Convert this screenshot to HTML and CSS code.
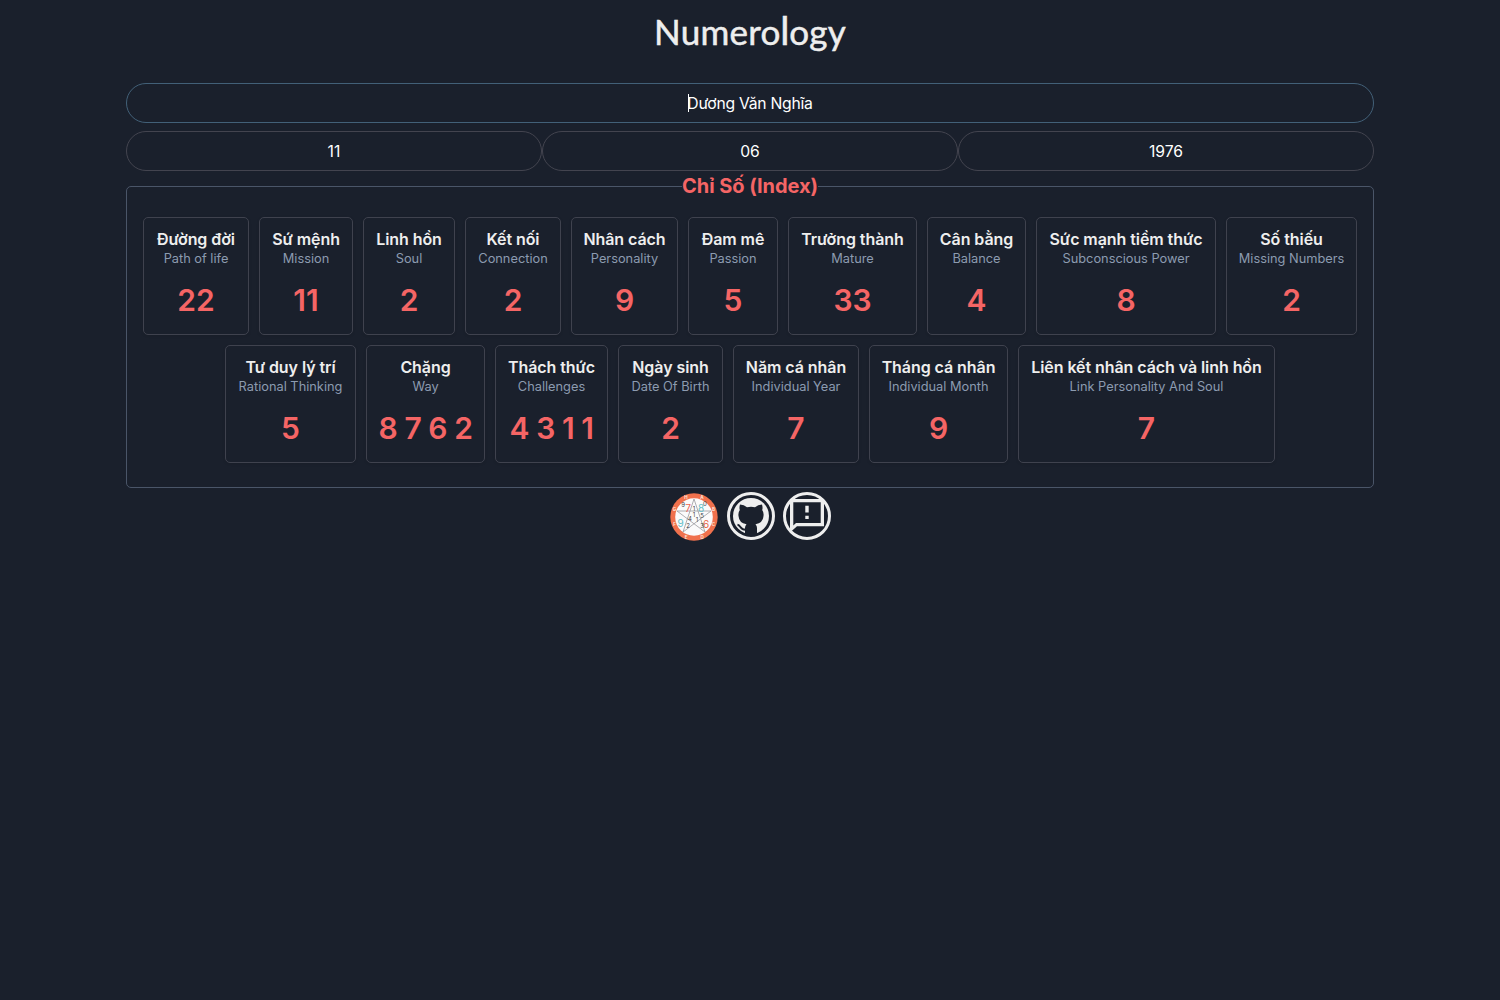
FILE: index.html
```html
<!DOCTYPE html>
<html lang="vi">
<head>
<meta charset="utf-8">
<title>Numerology</title>
<link rel="stylesheet" href="styles.css">
</head>
<body>
<main class="page">
  <h1 class="brand">Numero<span class="tall">l</span>ogy</h1>
  <div class="field field-name"><span class="value"><i class="caret"></i>Dương Văn Nghĩa</span></div>
  <div class="date">
    <div class="field">11</div>
    <div class="field">06</div>
    <div class="field">1976</div>
  </div>
  <section class="index">
    <h2 class="legend"><span>Chỉ Số (Index)</span></h2>
    <div class="cards">
      <article class="card" style="width:106px"><h3>Đường đời</h3><p>Path of life</p><strong>22</strong></article>
      <article class="card" style="width:94px"><h3>Sứ mệnh</h3><p>Mission</p><strong>11</strong></article>
      <article class="card" style="width:92px"><h3>Linh hồn</h3><p>Soul</p><strong>2</strong></article>
      <article class="card" style="width:96px"><h3>Kết nối</h3><p>Connection</p><strong>2</strong></article>
      <article class="card" style="width:107px"><h3>Nhân cách</h3><p>Personality</p><strong>9</strong></article>
      <article class="card" style="width:90px"><h3>Đam mê</h3><p>Passion</p><strong>5</strong></article>
      <article class="card" style="width:129px"><h3>Trưởng thành</h3><p>Mature</p><strong>33</strong></article>
      <article class="card" style="width:99px"><h3>Cân bằng</h3><p>Balance</p><strong>4</strong></article>
      <article class="card" style="width:180px"><h3>Sức mạnh tiềm thức</h3><p>Subconscious Power</p><strong>8</strong></article>
      <article class="card" style="width:131px"><h3>Số thiếu</h3><p>Missing Numbers</p><strong>2</strong></article>
      <article class="card" style="width:131px"><h3>Tư duy lý trí</h3><p>Rational Thinking</p><strong>5</strong></article>
      <article class="card" style="width:119px"><h3>Chặng</h3><p>Way</p><strong class="series">8 7 6 2</strong></article>
      <article class="card" style="width:113px"><h3>Thách thức</h3><p>Challenges</p><strong class="series">4 3 1 1</strong></article>
      <article class="card" style="width:105px"><h3>Ngày sinh</h3><p>Date Of Birth</p><strong>2</strong></article>
      <article class="card" style="width:126px"><h3>Năm cá nhân</h3><p>Individual Year</p><strong>7</strong></article>
      <article class="card" style="width:139px"><h3>Tháng cá nhân</h3><p>Individual Month</p><strong>9</strong></article>
      <article class="card" style="width:257px"><h3>Liên kết nhân cách và linh hồn</h3><p>Link Personality And Soul</p><strong>7</strong></article>
    </div>
  </section>
  <footer class="links">
    <svg class="wheel" viewBox="0 0 48 48" width="48" height="48">
      <circle cx="24" cy="24" r="23.7" fill="#f0714d"/>
      <circle cx="24" cy="24" r="18.8" fill="#fbfbfb"/>
      <path d="M24 6L13 39L41 18H7L35 39Z" fill="none" stroke="#9a9a9e" stroke-width=".8"/>
      <g fill="#ffe2d8" class="rim"><text x="16" y="5.500">H</text><text x="32" y="5.500">A</text><text x="43.500" y="18">B</text><text x="43.500" y="33">C</text><text x="32" y="45.500">D</text><text x="16" y="45.500">E</text><text x="4.500" y="33">F</text><text x="4.500" y="18">G</text></g>
      <g class="big"><text x="18" y="19" fill="#ee6352">7</text><text x="31" y="18.500" fill="#63bfc8">8</text><text x="10.500" y="34" fill="#63bfc8">9</text><text x="36" y="35" fill="#e96645">6</text></g>
      <g class="small" fill="#424247"><text x="24" y="18">1</text><text x="32" y="25">5</text><text x="18" y="35">2</text><text x="32" y="35">3</text><text x="24" y="24">1</text><text x="20" y="28">4</text><text x="27" y="29">1</text><text x="13" y="14">9</text><text x="35" y="13">0</text></g>
    </svg>
    <svg viewBox="0 0 48 48" width="48" height="48">
      <circle cx="24" cy="24" r="22.500" fill="none" stroke="#eee" stroke-width="3"/>
      <circle cx="24" cy="24" r="18" fill="#eee"/>
      <path d="M13 12.500Q17 12.500 20 15.300Q24 14.400 28 15.300Q31 12.500 35 12.500Q36 15.500 35.200 18Q37 20.500 36.500 24Q36 31 28.500 32.200Q30 34 30 36V42.500H18V36Q18 34 19.500 32.200Q12 31 11.500 24Q11 20.500 12.800 18Q12 15.500 13 12.500Z" fill="#1a202c"/>
      <path d="M10.500 32.800C14 33 13 38.300 19 37.800" fill="none" stroke="#1a202c" stroke-width="2"/>
    </svg>
    <svg viewBox="0 0 48 48" width="48" height="48">
      <circle cx="24" cy="24" r="22.500" fill="none" stroke="#eee" stroke-width="3"/>
      <path d="M7 7H41V34.300H14L7 40.500ZM10.300 10.300V33.500L13 30.900H37.700V10.300Z" fill="#eee" fill-rule="evenodd"/>
      <path d="M22.300 13.700h3.400v6.700h-3.400zM22.300 23.700h3.400v3.400h-3.400z" fill="#eee"/>
    </svg>
  </footer>
</main>
</body>
</html>
```
FILE: styles.css
```css
* { box-sizing: border-box; }
body {
  margin: 0;
  background: #1a202c;
  color: #eee;
  font-family: Inter, "Noto Sans", sans-serif;
  font-size: 16px;
}
h1, h2, h3, p { margin: 0; }
.page {
  width: 1248px;
  margin: 0 auto;
  display: flex;
  flex-direction: column;
}
.brand {
  height: 83px;
  padding-top: 8px;
  text-align: center;
  font: 400 35px/46px Lato, sans-serif;
  letter-spacing: .25px;
  -webkit-text-stroke: .5px #eee;
}
.tall {
  display: inline-block;
  font-size: 39px;
  line-height: 24px;
  margin: 0 -.4px;
}
.field {
  flex: 1 0 40px;
  height: 40px;
  display: flex;
  align-items: center;
  justify-content: center;
  border: 1px solid #43444f;
  border-radius: 20px;
  font-size: 15.7px;
  color: #fff;
}
.field-name { border-color: #426078; letter-spacing: -.25px; }
.value { position: relative; }
.caret {
  position: absolute;
  left: 1px;
  top: 0;
  width: 1px;
  height: 18px;
  background: #fff;
}
.date { display: flex; margin-top: 8px; }
.index {
  height: 302px;
  margin-top: 15px;
  border: 1px solid #4a5568;
  border-radius: 5px;
}
.legend {
  height: 30px;
  display: flex;
  justify-content: center;
  font-size: 20px;
  line-height: 24px;
  font-weight: 700;
  letter-spacing: -.05px;
  color: #f56565;
}
.legend span {
  width: 136px;
  height: 24px;
  margin-top: -13px;
  text-align: center;
  white-space: nowrap;
  background: #1a202c;
}
.cards {
  display: flex;
  flex-wrap: wrap;
  justify-content: center;
  gap: 10px;
}
.card {
  height: 118px;
  padding-top: 11px;
  display: flex;
  flex-direction: column;
  align-items: center;
  white-space: nowrap;
  border: 1px solid #3f424e;
  border-radius: 5px;
  box-shadow: 0 1px 3px rgba(0, 0, 0, .1);
}
.card h3 { font-size: 16px; line-height: 20px; font-weight: 600; letter-spacing: -.07px; }
.card p { font-size: 12.8px; line-height: 20px; color: #8c9bb0; }
.card strong { margin-top: 11px; font-size: 30px; line-height: 40px; font-weight: 600; color: #f56565; }
.card .series { letter-spacing: -.45px; }
.links { display: flex; justify-content: center; gap: 8px; padding-top: 4px; }
.wheel { margin: 1px 1px 0 0; }
.wheel text { text-anchor: middle; }
.rim { font-size: 4.500px; font-weight: 700; }
.big { font-size: 10px; }
.small { font-size: 6px; }
```
